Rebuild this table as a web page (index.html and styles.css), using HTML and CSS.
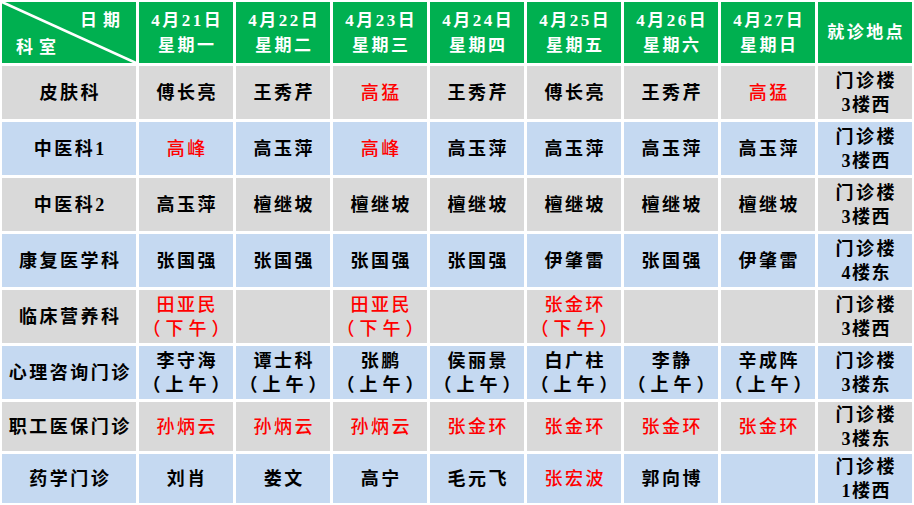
FILE: index.html
```html
<!DOCTYPE html>
<html lang="zh-CN">
<head>
<meta charset="utf-8">
<title>门诊排班表</title>
<link rel="stylesheet" href="styles.css">
</head>
<body>
<div class="sheet">
  <div class="cell hd corner">
    <svg class="diag" viewBox="0 0 134 61" preserveAspectRatio="none"><line x1="0" y1="0" x2="134" y2="61" stroke="#fff" stroke-width="2.6"/></svg>
    <span class="c-top">日期</span>
    <span class="c-bot">科室</span>
  </div>
  <div class="cell hd"><span>4月21日</span><span>星期一</span></div>
  <div class="cell hd"><span>4月22日</span><span>星期二</span></div>
  <div class="cell hd"><span>4月23日</span><span>星期三</span></div>
  <div class="cell hd"><span>4月24日</span><span>星期四</span></div>
  <div class="cell hd"><span>4月25日</span><span>星期五</span></div>
  <div class="cell hd"><span>4月26日</span><span>星期六</span></div>
  <div class="cell hd"><span>4月27日</span><span>星期日</span></div>
  <div class="cell hd"><span>就诊地点</span></div>

  <div class="cell g dept">皮肤科</div>
  <div class="cell g">傅长亮</div>
  <div class="cell g">王秀芹</div>
  <div class="cell g red">高猛</div>
  <div class="cell g">王秀芹</div>
  <div class="cell g">傅长亮</div>
  <div class="cell g">王秀芹</div>
  <div class="cell g red">高猛</div>
  <div class="cell g loc"><span>门诊楼</span><span>3楼西</span></div>

  <div class="cell b dept">中医科1</div>
  <div class="cell b red">高峰</div>
  <div class="cell b">高玉萍</div>
  <div class="cell b red">高峰</div>
  <div class="cell b">高玉萍</div>
  <div class="cell b">高玉萍</div>
  <div class="cell b">高玉萍</div>
  <div class="cell b">高玉萍</div>
  <div class="cell b loc"><span>门诊楼</span><span>3楼西</span></div>

  <div class="cell g dept">中医科2</div>
  <div class="cell g">高玉萍</div>
  <div class="cell g">檀继坡</div>
  <div class="cell g">檀继坡</div>
  <div class="cell g">檀继坡</div>
  <div class="cell g">檀继坡</div>
  <div class="cell g">檀继坡</div>
  <div class="cell g">檀继坡</div>
  <div class="cell g loc"><span>门诊楼</span><span>3楼西</span></div>

  <div class="cell b dept">康复医学科</div>
  <div class="cell b">张国强</div>
  <div class="cell b">张国强</div>
  <div class="cell b">张国强</div>
  <div class="cell b">张国强</div>
  <div class="cell b">伊肇雷</div>
  <div class="cell b">张国强</div>
  <div class="cell b">伊肇雷</div>
  <div class="cell b loc"><span>门诊楼</span><span>4楼东</span></div>

  <div class="cell g dept">临床营养科</div>
  <div class="cell g red"><span>田亚民</span><span class="time">（下午）</span></div>
  <div class="cell g"></div>
  <div class="cell g red"><span>田亚民</span><span class="time">（下午）</span></div>
  <div class="cell g"></div>
  <div class="cell g red"><span>张金环</span><span class="time">（下午）</span></div>
  <div class="cell g"></div>
  <div class="cell g"></div>
  <div class="cell g loc"><span>门诊楼</span><span>3楼西</span></div>

  <div class="cell b dept">心理咨询门诊</div>
  <div class="cell b"><span>李守海</span><span class="time">（上午）</span></div>
  <div class="cell b"><span>谭士科</span><span class="time">（上午）</span></div>
  <div class="cell b"><span>张鹏</span><span class="time">（上午）</span></div>
  <div class="cell b"><span>侯丽景</span><span class="time">（上午）</span></div>
  <div class="cell b"><span>白广柱</span><span class="time">（上午）</span></div>
  <div class="cell b"><span>李静</span><span class="time">（上午）</span></div>
  <div class="cell b"><span>辛成阵</span><span class="time">（上午）</span></div>
  <div class="cell b loc"><span>门诊楼</span><span>3楼东</span></div>

  <div class="cell g dept">职工医保门诊</div>
  <div class="cell g red">孙炳云</div>
  <div class="cell g red">孙炳云</div>
  <div class="cell g red">孙炳云</div>
  <div class="cell g red">张金环</div>
  <div class="cell g red">张金环</div>
  <div class="cell g red">张金环</div>
  <div class="cell g red">张金环</div>
  <div class="cell g loc"><span>门诊楼</span><span>3楼东</span></div>

  <div class="cell b dept">药学门诊</div>
  <div class="cell b">刘肖</div>
  <div class="cell b">娄文</div>
  <div class="cell b">高宁</div>
  <div class="cell b">毛元飞</div>
  <div class="cell b red">张宏波</div>
  <div class="cell b">郭向博</div>
  <div class="cell b"></div>
  <div class="cell b loc"><span>门诊楼</span><span>1楼西</span></div>
</div>
</body>
</html>
```

FILE: styles.css
```css
html, body {
  margin: 0;
  padding: 0;
  background: #ffffff;
}

.sheet {
  display: grid;
  grid-template-columns: 134px repeat(8, 94px);
  grid-template-rows: 61px repeat(6, 53px) 49px 49px;
  gap: 3px;
  padding: 2px;
  width: 910px;
  font-family: "Liberation Serif", "Noto Sans CJK SC", serif;
  font-size: 18px;
  font-weight: 700;
  color: #000000;
}

.cell {
  display: flex;
  flex-direction: column;
  align-items: center;
  justify-content: center;
  text-align: center;
  line-height: 24px;
  letter-spacing: 2.5px;
  padding-left: 2.5px;
  white-space: nowrap;
}

.hd {
  background: #00b050;
  color: #ffffff;
  font-size: 17px;
  line-height: 25px;
  letter-spacing: 2.5px;
}

.g {
  background: #d9d9d9;
}

.b {
  background: #c5d9f1;
}

.red {
  color: #ff0000;
  font-weight: 500;
}

.time {
  letter-spacing: 5px;
  margin-left: 2.5px;
}

.loc span:last-child {
  letter-spacing: 1.5px;
}

.corner {
  position: relative;
  align-items: stretch;
  justify-content: space-between;
  padding: 6px 10px 3px 14px;
  letter-spacing: 6px;
}

.diag {
  position: absolute;
  left: 0;
  top: 0;
  width: 100%;
  height: 100%;
}

.c-top {
  position: relative;
  align-self: flex-end;
}

.c-bot {
  position: relative;
  align-self: flex-start;
}
```
